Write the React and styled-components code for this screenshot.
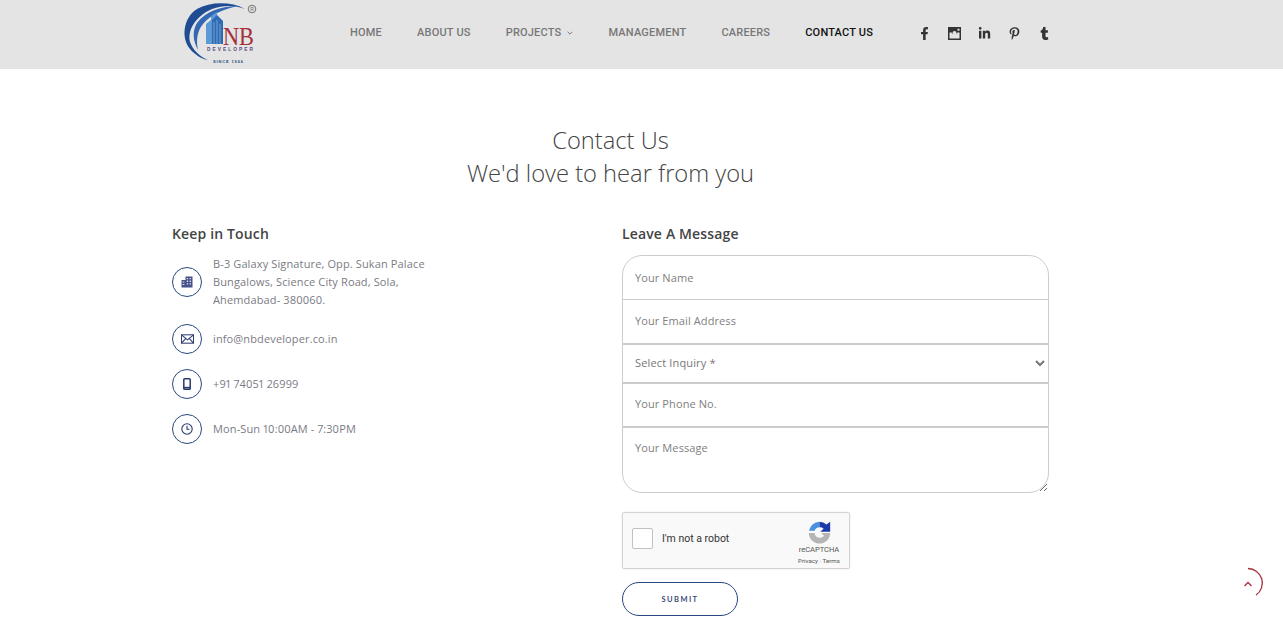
import React from "react"
import styled, { createGlobalStyle } from "styled-components"
import { FaFacebookF, FaLinkedinIn, FaPinterestP, FaTumblr } from "react-icons/fa"

const GlobalStyle = createGlobalStyle`
    html, body {
        margin: 0;
        background: #fff;
        overflow: hidden;
    }

    * {
        box-sizing: border-box;
    }

    body {
        font-family: "Open Sans", "Liberation Sans", sans-serif;
    }
`

const Logo = () => (
    <LogoSvg viewBox="0 0 100 69" width="100" height="69">
        <path d="M75 9C60 1 40 2 27 9C13 18 11 38 20 49C25 55 32 59 38 60C29 56 23 50 20 42C17 28 28 15 42 9C53 5 65 5 75 9Z" fill="#1f4c93" />
        <path d="M68 6C52 6 36 11 27 23C22 31 23 41 28 50C26 41 27 31 33 24C41 14 54 9 68 6Z" fill="#3568b3" />
        <path d="M36 44V24L41 20V16L47 12V44Z" fill="#5b9ad6" />
        <path d="M42 44V20L47 15 53 21V44Z" fill="#2d6cb3" />
        <path d="M44 44V22M47 44V20M50 44V24" stroke="#a8c8e8" strokeWidth="0.6" />
        <circle cx="82" cy="9" r="3.8" fill="none" stroke="#666" strokeWidth="0.9" />
        <text x="80.3" y="11" fontSize="5" fill="#666" fontFamily="Liberation Sans">R</text>
        <text x="53" y="45" fontSize="25" fill="#a5303a" fontFamily="Liberation Serif" textLength="31" lengthAdjust="spacingAndGlyphs">NB</text>
        <text x="37" y="51" fontSize="4.8" fontWeight="700" fill="#5a4a80" fontFamily="Liberation Sans" textLength="46" lengthAdjust="spacing">DEVELOPER</text>
        <text x="43" y="63" fontSize="4" fontWeight="700" fill="#27497f" fontFamily="Liberation Sans" textLength="30" lengthAdjust="spacing">SINCE 1966</text>
    </LogoSvg>
)

const InstagramIcon = () => (
    <svg viewBox="0 0 13 13" width="13" height="13">
        <path d="M0 0h13v13H0z" fill="#333" />
        <path d="M1.5 5.5h2.1a3.2 3.2 0 0 0 5.8 0h2.1v6H1.5z" fill="#e4e4e4" />
        <circle cx="6.5" cy="6" r="2" fill="#e4e4e4" />
        <path d="M9.5 1.7h2v2h-2z" fill="#e4e4e4" />
    </svg>
)

const BuildingIcon = () => (
    <svg viewBox="0 0 12 12" width="12" height="12">
        <path d="M4.5 0.5h7V11.5h-7z M0.5 4h4V11.5h-4z" fill="#46538a" />
        <path d="M5.8 2h1.3v1.3H5.8z M8.6 2h1.3v1.3H8.6z M5.8 4.6h1.3v1.3H5.8z M8.6 4.6h1.3v1.3H8.6z M5.8 7.2h1.3v1.3H5.8z M8.6 7.2h1.3v1.3H8.6z M1.6 5.6h1.8v1H1.6z M1.6 8h1.8v1H1.6z" fill="#dfe3ee" />
    </svg>
)

const MailIcon = () => (
    <svg viewBox="0 0 14 10" width="13" height="10" fill="none" stroke="#2b3a70" strokeWidth="1.1">
        <rect x="0.5" y="0.5" width="13" height="9" />
        <path d="M0.5 0.5 7 6l6.5-5.5M0.5 9.5 5 4.5M13.5 9.5 9 4.5" />
    </svg>
)

const PhoneIcon = () => (
    <svg viewBox="0 0 8 12" width="8" height="12" fill="none" stroke="#2b3a70" strokeWidth="1.5">
        <rect x="0.8" y="0.8" width="6.4" height="10.4" rx="0.8" />
        <path d="M0.8 9.6h6.4" />
    </svg>
)

const ClockIcon = () => (
    <svg viewBox="0 0 12 12" width="12" height="12" fill="none" stroke="#2b3a70" strokeWidth="1.1">
        <circle cx="6" cy="6" r="5.2" />
        <path d="M6 2.8V6.3H8.6" />
    </svg>
)

const RecaptchaLogo = () => (
    <svg viewBox="0 0 28 28" width="23" height="23">
        <path d="M14 1A13 13 0 0 0 1.2 12H8A6.5 6.5 0 0 1 14 7.5Z" fill="#4a90e2" />
        <path d="M14 1A13 13 0 0 1 22.5 4.2L27 1V13H15L19 9.3A6.5 6.5 0 0 0 14 7.5Z" fill="#1c3aa9" />
        <path d="M1 14.5H8A6.5 6.5 0 0 0 19.5 18L16 14.5H27A13 13 0 0 1 1 14.5Z" fill="#b5b5b5" />
    </svg>
)

const Chevron = () => (
    <svg viewBox="0 0 10 6" width="6" height="4" fill="none" stroke="#666" strokeWidth="1.4">
        <path d="M1 1l4 4 4-4" />
    </svg>
)

const contacts = [
    { icon: <BuildingIcon />, lines: ["B-3 Galaxy Signature, Opp. Sukan Palace", "Bungalows, Science City Road, Sola,", "Ahemdabad- 380060."] },
    { icon: <MailIcon />, lines: ["info@nbdeveloper.co.in"] },
    { icon: <PhoneIcon />, lines: ["+91 74051 26999"] },
    { icon: <ClockIcon />, lines: ["Mon-Sun 10:00AM - 7:30PM"] },
]

export default function App() {
    return (
        <>
            <GlobalStyle />
            <Header>
                <LogoSlot>
                    <Logo />
                </LogoSlot>
                <Nav>
                    <NavItem>HOME</NavItem>
                    <NavItem>ABOUT US</NavItem>
                    <NavItem>PROJECTS <Chevron /></NavItem>
                    <NavItem>MANAGEMENT</NavItem>
                    <NavItem>CAREERS</NavItem>
                    <NavItem $active>CONTACT US</NavItem>
                </Nav>
                <Social>
                    <SocialLink><FaFacebookF size={13} /></SocialLink>
                    <SocialLink><InstagramIcon /></SocialLink>
                    <SocialLink><FaLinkedinIn size={13} /></SocialLink>
                    <SocialLink><FaPinterestP size={13} /></SocialLink>
                    <SocialLink><FaTumblr size={13} /></SocialLink>
                </Social>
            </Header>
            <Main>
                <Title>Contact Us<br />We'd love to hear from you</Title>
                <Columns>
                    <section>
                        <SectionHeading>Keep in Touch</SectionHeading>
                        <ContactList>
                            {contacts.map((c) => (
                                <ContactRow key={c.lines[0]}>
                                    <IconCircle>{c.icon}</IconCircle>
                                    <ContactText>
                                        {c.lines.map((l) => <div key={l}>{l}</div>)}
                                    </ContactText>
                                </ContactRow>
                            ))}
                        </ContactList>
                    </section>
                    <section>
                        <SectionHeading>Leave A Message</SectionHeading>
                        <Form>
                            <NameField placeholder="Your Name" />
                            <Field placeholder="Your Email Address" />
                            <Select defaultValue="">
                                <option value="">Select Inquiry *</option>
                            </Select>
                            <PhoneField placeholder="Your Phone No." />
                            <Message placeholder="Your Message" />
                        </Form>
                        <Captcha>
                            <CheckBox />
                            <CaptchaLabel>I'm not a robot</CaptchaLabel>
                            <CaptchaBrand>
                                <RecaptchaLogo />
                                <BrandName>reCAPTCHA</BrandName>
                                <BrandLinks>Privacy · Terms</BrandLinks>
                            </CaptchaBrand>
                        </Captcha>
                        <Submit>SUBMIT</Submit>
                    </section>
                </Columns>
            </Main>
            <ScrollTop>
                <svg viewBox="0 0 36 36" width="36" height="36" fill="none" stroke="#a5303a">
                    <path d="M18 3.5A14.5 14.5 0 0 1 26 30" strokeWidth="1.3" />
                    <path d="M14.5 21 18 17.5l3.5 3.5" strokeWidth="1.3" />
                </svg>
            </ScrollTop>
        </>
    )
}

const Header = styled.header`
    height: 69px;
    background: #e4e4e4;
    display: flex;
    align-items: center;
    padding-left: 170px;
`

const LogoSlot = styled.div`
    width: 180px;
    display: flex;
`

const LogoSvg = styled.svg`
    display: block;
`

const Nav = styled.nav`
    display: flex;
    align-items: center;
    gap: 35px;
    width: 559px;
    margin-bottom: 4px;
`

const NavItem = styled.a`
    font-family: Roboto, "Liberation Sans", sans-serif;
    font-size: 11px;
    font-weight: 500;
    letter-spacing: 0.2px;
    color: ${(p) => (p.$active ? "#111" : "#777")};
    white-space: nowrap;

    svg {
        margin-left: 3px;
        vertical-align: 1px;
    }
`

const Social = styled.div`
    display: flex;
    align-items: center;
    margin-bottom: 3px;
`

const SocialLink = styled.a`
    width: 30px;
    height: 16px;
    display: flex;
    align-items: center;
    justify-content: center;
    color: #333;
`

const Main = styled.main`
    width: 877px;
    margin-left: 172px;
    padding-top: 55px;
`

const Title = styled.h1`
    margin: 0;
    text-align: center;
    font-size: 23.7px;
    line-height: 33px;
    font-weight: 300;
    color: #444;
`

const Columns = styled.div`
    display: grid;
    grid-template-columns: 450px 427px;
    margin-top: 34px;
`

const SectionHeading = styled.h3`
    margin: 0;
    font-size: 14px;
    line-height: 20px;
    font-weight: 600;
    letter-spacing: 0.15px;
    color: #444;
`

const ContactList = styled.div`
    display: flex;
    flex-direction: column;
    gap: 15px;
    margin-top: 11px;
`

const ContactRow = styled.div`
    display: flex;
    align-items: center;
    gap: 11px;
`

const IconCircle = styled.div`
    width: 30px;
    height: 30px;
    border: 1px solid #27497f;
    border-radius: 50%;
    display: flex;
    align-items: center;
    justify-content: center;
    flex: none;
`

const ContactText = styled.div`
    font-size: 11px;
    line-height: 18px;
    letter-spacing: 0.13px;
    font-variant-numeric: proportional-nums;
    color: #7b7b85;
`

const Form = styled.form`
    display: flex;
    flex-direction: column;
    margin-top: 11px;
`

const controlBase = `
    display: block;
    width: 100%;
    border: 1px solid #ccc;
    background: #fff;
    padding: 0 12px;
    font-family: "Open Sans", "Liberation Sans", sans-serif;
    font-size: 11px;
    letter-spacing: 0.1px;
    color: #777;
    outline: none;
    border-radius: 0;

    &::placeholder {
        color: #808080;
        opacity: 1;
    }
`

const Field = styled.input`
    ${controlBase}
    height: 45px;
    padding-bottom: 2px;
`

const NameField = styled(Field)`
    margin-bottom: -1px;
    padding-bottom: 0;
    border-radius: 20px 20px 0 0;
`

const PhoneField = styled(Field)`
    height: 44px;
    padding-bottom: 3px;
`

const Select = styled.select`
    ${controlBase}
    height: 39px;
    padding-left: 8px;
    padding-bottom: 2px;
    letter-spacing: 0.15px;
`

const Message = styled.textarea`
    ${controlBase}
    height: 66px;
    padding-top: 12px;
    border-radius: 0 0 20px 20px;
    resize: vertical;
`

const Captcha = styled.div`
    width: 228px;
    height: 57px;
    margin-top: 19px;
    background: #f9f9f9;
    border: 1px solid #d3d3d3;
    border-radius: 2px;
    box-shadow: 0 0 3px rgba(0, 0, 0, 0.08);
    display: flex;
    align-items: center;
    padding-left: 9px;
`

const CheckBox = styled.div`
    width: 21px;
    height: 21px;
    margin-bottom: 5px;
    background: #fff;
    border: 1px solid #c1c1c1;
    border-radius: 2px;
`

const CaptchaLabel = styled.span`
    margin: 0 0 5px 9px;
    font-family: Roboto, "Liberation Sans", sans-serif;
    font-size: 10.5px;
    color: #333;
`

const CaptchaBrand = styled.div`
    margin-left: auto;
    width: 60px;
    align-self: flex-end;
    padding-bottom: 2px;
    display: flex;
    flex-direction: column;
    align-items: center;
    font-family: Roboto, "Liberation Sans", sans-serif;
    color: #555;
`

const BrandName = styled.div`
    font-size: 7.5px;
    line-height: 10px;
    margin-top: 1px;
`

const BrandLinks = styled.div`
    font-size: 6.2px;
    line-height: 10px;
    margin-top: 1px;
`

const Submit = styled.button`
    display: block;
    width: 116px;
    height: 34px;
    margin-top: 13px;
    background: #fff;
    border: 1px solid #27497f;
    border-radius: 17px;
    font-family: "Lato", "Liberation Sans", sans-serif;
    font-size: 7.5px;
    font-weight: 700;
    letter-spacing: 1.4px;
    color: #3c4a78;
`

const ScrollTop = styled.div`
    position: fixed;
    right: 17px;
    top: 565px;
    width: 36px;
    height: 36px;
`
